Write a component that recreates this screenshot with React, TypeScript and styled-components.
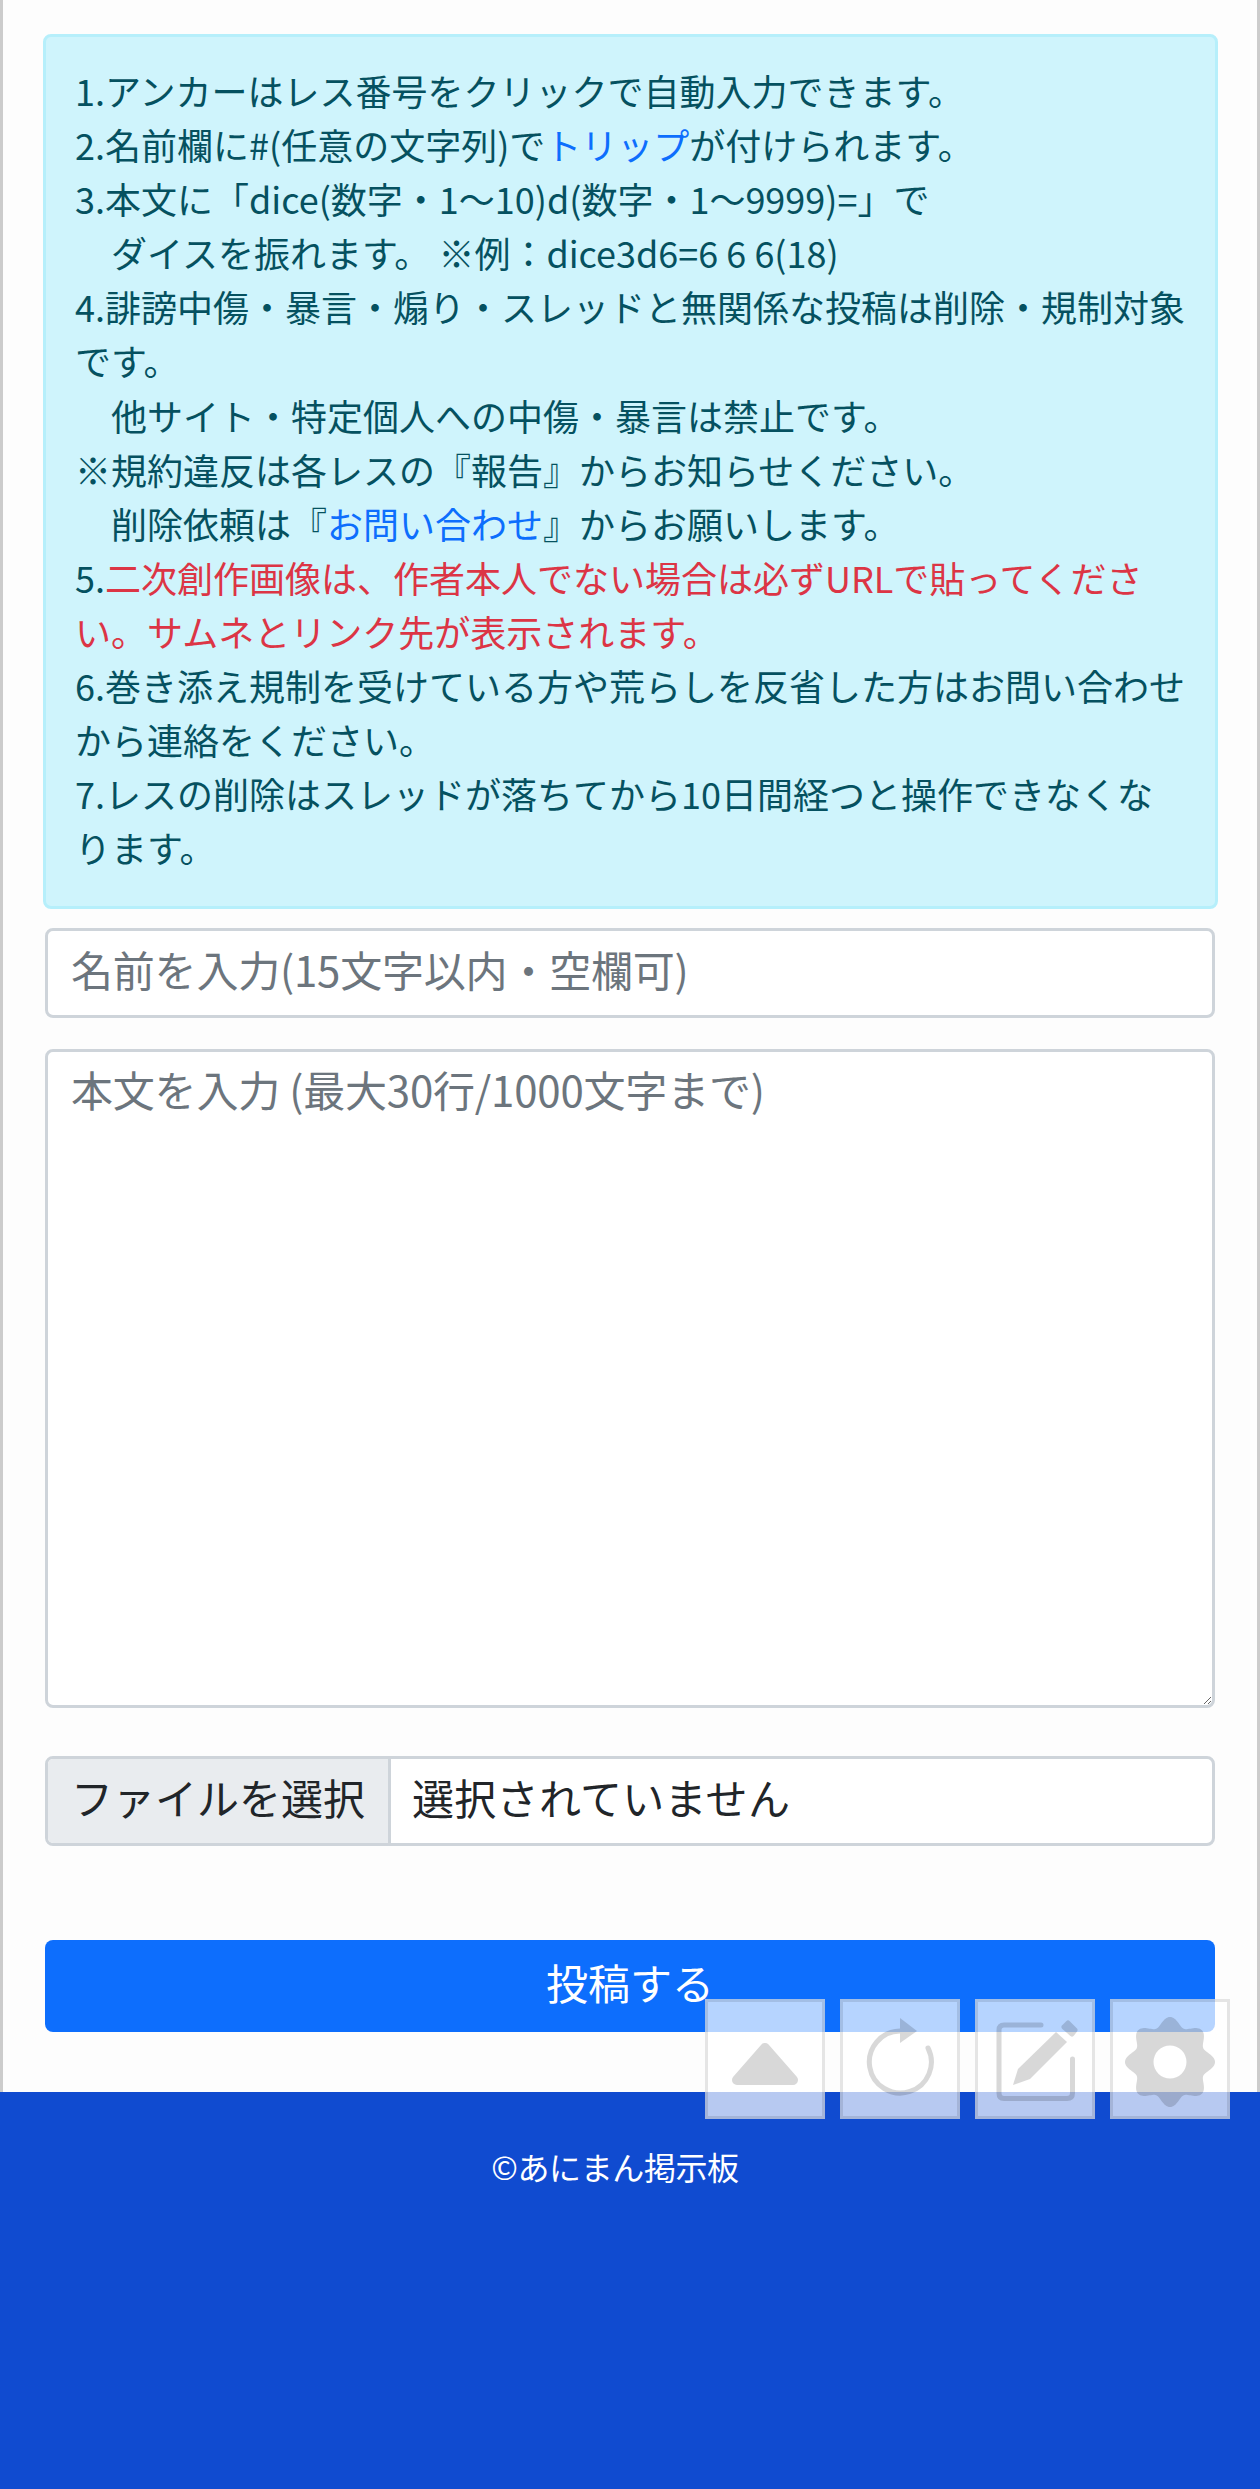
import React from 'react'
import styled, { createGlobalStyle } from 'styled-components'

const GlobalStyle = createGlobalStyle`
  html, body {
    margin: 0;
    padding: 0;
    background: #fdfdfd;
  }
  * {
    box-sizing: border-box;
  }
`

const FONT = `'Noto Sans CJK JP', 'Noto Sans', sans-serif`

const Page = styled.div`
  position: relative;
  width: 1260px;
  height: 2489px;
  overflow: hidden;
  font-family: ${FONT};
`

const Main = styled.main`
  height: 2092px;
  padding: 34px 42px 0 40px;
  background: #fdfdfd;
  border-left: 3px solid #ccc;
  border-right: 3px solid #ccc;
`

const Notice = styled.div`
  width: 1175px;
  height: 875px;
  padding: 26px 27px 0 29px;
  margin-bottom: 19px;
  background: #cff4fc;
  border: 3px solid #b6effb;
  border-radius: 8px;
  color: #055160;
  font-size: 36px;
  line-height: 54.1px;
`

const Indent = styled.span`
  display: inline-block;
  width: 1em;
`

const NoticeLink = styled.span`
  color: #0d6efd;
`

const Warning = styled.span`
  color: #dc3545;
`

const Field = styled.input`
  display: block;
  width: 1170px;
  height: 90px;
  margin: 0 0 31px 2px;
  padding: 0 24px 10px 23px;
  background: #fff;
  border: 3px solid #ced4da;
  border-radius: 8px;
  font-family: ${FONT};
  font-size: 42px;
  letter-spacing: -0.2px;
  outline: none;

  &::placeholder {
    color: #6c757d;
    opacity: 1;
  }
`

const BodyField = styled.textarea`
  display: block;
  width: 1170px;
  height: 659px;
  margin: 0 0 48px 2px;
  padding: 5px 24px 8px 23px;
  background: #fff;
  border: 3px solid #ced4da;
  border-radius: 8px;
  font-family: ${FONT};
  font-size: 42px;
  line-height: 63px;
  letter-spacing: -0.2px;
  outline: none;

  &::placeholder {
    color: #6c757d;
    opacity: 1;
  }
`

const FilePicker = styled.div`
  display: flex;
  width: 1170px;
  height: 90px;
  margin: 0 0 94px 2px;
  background: #fff;
  border: 3px solid #ced4da;
  border-radius: 8px;
  overflow: hidden;
  color: #212529;
  font-size: 42px;
`

const FileButton = styled.span`
  display: flex;
  align-items: center;
  width: 343px;
  padding: 0 0 10px 23px;
  background: #e9ecef;
  border-right: 3px solid #ced4da;
  white-space: nowrap;
`

const FileName = styled.span`
  display: flex;
  align-items: center;
  padding: 0 0 10px 21px;
  letter-spacing: 0.3px;
`

const Submit = styled.button`
  display: block;
  width: 1170px;
  height: 92px;
  margin-left: 2px;
  padding: 0 0 10px;
  background: #0d6efd;
  border: none;
  border-radius: 8px;
  color: #fff;
  font-family: ${FONT};
  font-size: 42px;
`

const Footer = styled.footer`
  display: flex;
  justify-content: center;
  height: 397px;
  padding: 50px 30px 0 0;
  background: #104bd0;
  color: #fff;
  font-size: 32px;
  line-height: 48px;
  letter-spacing: -0.4px;
`

const FloatBar = styled.nav`
  position: absolute;
  top: 1999px;
  left: 705px;
  display: flex;
  gap: 15px;
`

const FloatButton = styled.div`
  width: 120px;
  height: 120px;
  background: rgba(255, 255, 255, 0.7);
  border: 3px solid rgba(0, 0, 0, 0.1);
`

const Icon = styled.svg`
  display: block;
  margin: -3px;
  width: 120px;
  height: 120px;
  opacity: 0.15;
`

// 8 lobes around a round hole
const gearPath = (() => {
  const pts: string[] = []
  for (let i = 0; i < 240; i++) {
    const t = (i / 240) * Math.PI * 2
    const r = 40.5 + 4.5 * Math.cos(8 * t)
    pts.push(`${(60 + r * Math.cos(t)).toFixed(2)} ${(63 + r * Math.sin(t)).toFixed(2)}`)
  }
  return `M${pts.join('L')}Z`
})()

const IconButtons = () => (
  <FloatBar>
    <FloatButton>
      <Icon viewBox="0 0 120 120">
        <path d="M60 49 L88 81 H32 Z" fill="#000" stroke="#000" strokeWidth="10" strokeLinejoin="round" />
      </Icon>
    </FloatButton>
    <FloatButton>
      <Icon viewBox="0 0 120 120">
        <path
          d="M60 32 A31 31 0 1 0 88 49"
          fill="none"
          stroke="#000"
          strokeWidth="5"
          strokeLinecap="round"
        />
        <path d="M60 19 L77 32 L60 44 Z" fill="#000" />
      </Icon>
    </FloatButton>
    <FloatButton>
      <Icon viewBox="0 0 120 120">
        <path
          d="M66 26 H29 Q24 26 24 31 V94 Q24 99.5 29 99.5 H92 Q97.5 99.5 97.5 94 V60"
          fill="none"
          stroke="#000"
          strokeWidth="5"
          strokeLinecap="round"
        />
        <path d="M38 86 L43 70 L81 33 L92 43 L55 80 Z" fill="#000" />
        <path d="M93 24 L100 31 L97 35 L89 28 Z" fill="#000" stroke="#000" strokeWidth="5" strokeLinejoin="round" />
      </Icon>
    </FloatButton>
    <FloatButton>
      <Icon viewBox="0 0 120 120">
        <path
          d={`${gearPath} M76.5 63 A16.5 16.5 0 1 0 43.5 63 A16.5 16.5 0 1 0 76.5 63 Z`}
          fill="#000"
          fillRule="evenodd"
        />
      </Icon>
    </FloatButton>
  </FloatBar>
)

const App: React.FC = () => {
  return (
    <Page>
      <GlobalStyle />
      <Main>
        <Notice>
          1.アンカーはレス番号をクリックで自動入力できます。
          <br />
          2.名前欄に#(任意の文字列)で<NoticeLink>トリップ</NoticeLink>が付けられます。
          <br />
          3.本文に「dice(数字・1〜10)d(数字・1〜9999)=」で
          <br />
          <Indent />ダイスを振れます。 ※例：dice3d6=6 6 6(18)
          <br />
          4.誹謗中傷・暴言・煽り・スレッドと無関係な投稿は削除・規制対象です。
          <br />
          <Indent />他サイト・特定個人への中傷・暴言は禁止です。
          <br />
          ※規約違反は各レスの『報告』からお知らせください。
          <br />
          <Indent />削除依頼は『<NoticeLink>お問い合わせ</NoticeLink>』からお願いします。
          <br />
          5.<Warning>二次創作画像は、作者本人でない場合は必ずURLで貼ってください。サムネとリンク先が表示されます。</Warning>
          <br />
          6.巻き添え規制を受けている方や荒らしを反省した方はお問い合わせから連絡をください。
          <br />
          7.レスの削除はスレッドが落ちてから10日間経つと操作できなくなります。
        </Notice>
        <Field placeholder="名前を入力(15文字以内・空欄可)" />
        <BodyField placeholder="本文を入力 (最大30行/1000文字まで)" />
        <FilePicker>
          <FileButton>ファイルを選択</FileButton>
          <FileName>選択されていません</FileName>
        </FilePicker>
        <Submit>投稿する</Submit>
      </Main>
      <Footer>©あにまん掲示板</Footer>
      <IconButtons />
    </Page>
  )
}

export default App
